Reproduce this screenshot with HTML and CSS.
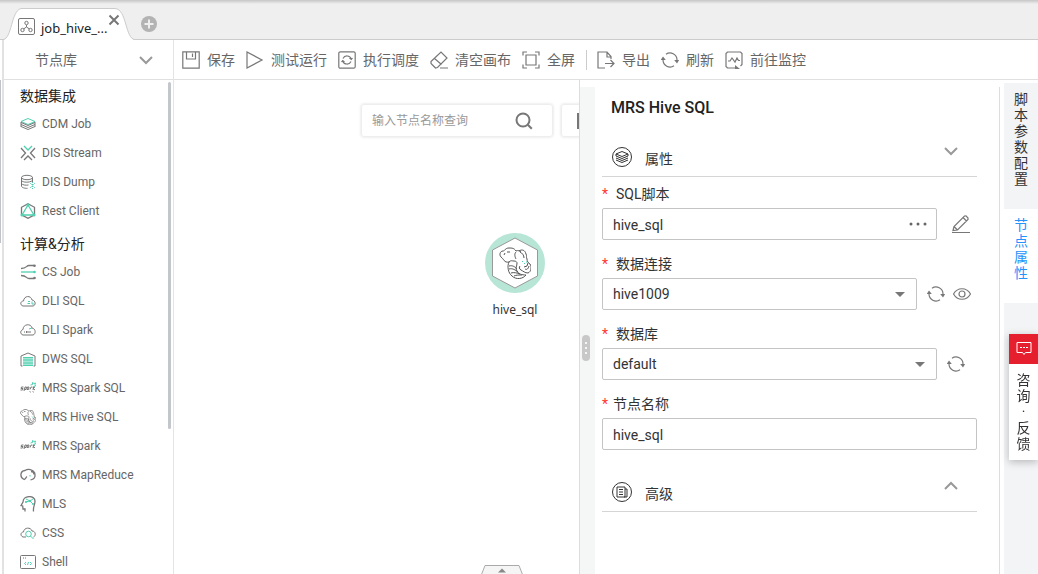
FILE: index.html
```
<!DOCTYPE html>
<html lang="zh-CN">
<head>
<meta charset="utf-8">
<title>job_hive_sql</title>
<link rel="stylesheet" href="styles.css">
</head>
<body>
<svg class="defs" width="0" height="0" aria-hidden="true">
  <symbol id="refresh" viewBox="0 0 18 18"><path d="M5 3.300A7 7 0 0 1 16 9M13 14.700A7 7 0 0 1 2 9"/><path class="solid" d="M-.3 9 2 5.500 4.800 9zM13.200 9h5L16 12.500z"/></symbol>
  <symbol id="down" viewBox="0 0 14 14"><path d="m1 4 6 6 6-6"/></symbol>
  <symbol id="elephant" viewBox="0 0 32 32"><path d="M10 15C5 16 5 12 2 10 0 8 1 4 4 4 6 4 6 1 10 1c3 0 5 0 7 3M10 15c2-2 3-1 5-1M17 4c2-1 4 0 5 1M20 4c3-2 6-1 7 3 1 2 0 3 1 5M21 5c2 1 4 3 4 6M28 12c0 2 1 4 3 5 2 3 1 8-2 9-3 0-5-2-7-3M30 19c-1 3-2 4-4 3M29 16l-1 3-3 1M10 15C8 19 9 26 13 29c4 4 11 3 14-1-4 0-8-1-9-4-2-3 0-5 0-8M15 14c2 0 3 1 3 2M10 19c4-1 6 1 8 3M10 22c4-1 6 1 9 3M12 26c3-1 6 0 9 1M15 29c2-1 5-1 8-1M22 23c-2-1-2-3-1-4M17 5c-2 2-1 5 0 7M5 8l1-2M8 5h3"/><path class="green" d="m23 14 1 1m1 2 1-1M27 15h1"/></symbol>
  <symbol id="spark" viewBox="0 0 16 16"><path d="M3.500 7H1.500l-.5 1.500h2L2.500 10H.5M4 11l1-4h1.500L6 9.500H4.500M9 7H7.500L7 9.500h1.500L9 7M10 9.500 11 7l1.500.2M13 10l.7-3.500M15 7l-2 1.300L15 10"/><path class="green" d="m10.500 5 2-.5V2.500l1.500 1 1.500-.5-.5 1.500.5 1.500-2 .5"/></symbol>
</svg>
<header class="tabbar">
  <div class="tab">
    <svg class="tab-shape" viewBox="0 0 132 32"><path d="M0 32C9 31 8 3 18 .5H112C124 1 122 31 132 32z" fill="#fff"/><path d="M0 31.500C9 31 8 3 18 .5H112C124 1 122 31 132 31.500" fill="none" stroke="#ccc"/></svg>
    <svg class="ic tab-icon" viewBox="0 0 18 18"><rect x=".5" y=".5" width="16" height="16" rx="1.500"/><circle cx="8.500" cy="5" r="1.700"/><circle cx="4.500" cy="12" r="1.700"/><circle cx="12.500" cy="12" r="1.700"/><path d="M8.500 7v2l-3 2m3-2 3 2"/></svg>
    <span class="tab-title">job_hive_...</span>
    <button class="tab-close" aria-label="关闭"><svg class="ic" viewBox="0 0 12 12"><path d="m1.500 1.500 9 9m0-9-9 9"/></svg></button>
  </div>
  <button class="tab-add" aria-label="新建"><svg viewBox="0 0 16 16"><circle cx="8" cy="8" r="8" fill="#b3b3b3"/><path d="M8 3.500v9M3.500 8h9" stroke="#efefef" stroke-width="2"/></svg></button>
</header>
<div class="shell">
  <div class="rail"></div>
  <aside class="library">
    <button class="library-head"><span>节点库</span><svg class="ic" viewBox="0 0 14 14"><use href="#down"/></svg></button>
    <nav class="nodes">
      <section>
        <h2>数据集成</h2>
        <ul>
          <li><svg class="ic" viewBox="0 0 16 16"><path class="green" d="M1 5.500 8 2.500l7 3-7 3z"/><path d="m1 6.500 7 3 7-3M1 8.500l7 3 7-3M1 10.500l7 3 7-3M1 6v5M15 6v5"/></svg>CDM Job</li>
          <li><svg class="ic" viewBox="0 0 16 16"><path class="green bold" d="m4 1 4 4 4-4"/><path class="bold" d="m1 3 4.500 5L1 13M15 3l-4.500 5 4.500 5M4 15l4-4 4 4"/></svg>DIS Stream</li>
          <li><svg class="ic" viewBox="0 0 16 16"><ellipse cx="7" cy="3.500" rx="5.500" ry="2.200"/><path d="M1.500 3.500V12c0 1.500 3 2.500 6 2.300M12.500 3.500V8M1.500 6.500c1 2 8 2.500 11 0M1.500 9.500c1 1.500 4 2 7 1.500"/><path class="green" d="m10 9 5 5m0-5-5 5m2.500-6v7" stroke-dasharray="1 1"/></svg>DIS Dump</li>
          <li><svg class="ic" viewBox="0 0 16 16"><path class="bold" d="m8 .8 6.500 3.500v7.500L8 15.300l-6.500-3.500V4.300z"/><path class="green bold" d="m8 2 6 10H2z"/><circle class="mint" cx="8" cy="2" r="1.500"/><circle class="mint" cx="2" cy="12" r="1.500"/><circle class="mint" cx="14" cy="12" r="1.500"/></svg>Rest Client</li>
        </ul>
      </section>
      <section>
        <h2>计算&amp;分析</h2>
        <ul>
          <li><svg class="ic" viewBox="0 0 16 16"><path class="bold" d="M1 4.500c6 0 5-3 8-3h5M1 11.500c6 0 5 3 8 3h5"/><path class="green bold" d="M1 8h13"/><circle class="dot" cx="14.500" cy="1.800" r="1.300"/><circle class="dot" cx="14.500" cy="14" r="1.300"/><circle class="mint" cx="14.500" cy="8" r="1.300"/></svg>CS Job</li>
          <li><svg class="ic" viewBox="0 0 16 16"><path d="M3 13C-.5 12 .5 8 3.500 8 4 2.500 11 2 12 7c4 .5 4 5.500 1 6z"/><path class="green" d="M8 8.500h2M7.500 10.500H10M12 8.500v2.500h2"/></svg>DLI SQL</li>
          <li><svg class="ic" viewBox="0 0 16 16"><path d="M3 13C-.5 12 .5 8 3 7.500 3 2 11 1 12 6c4 .5 4 6.500 1 7zM4 10h1M6.500 9v2M8 9v2M10 9v2"/><path class="green" d="m9 7 3-1"/></svg>DLI Spark</li>
          <li><svg class="ic" viewBox="0 0 16 16"><path d="M1 15V5l7-3 7 3v10M1 15h1.500M15 15h-1.500"/><path class="mint" d="M3 6h10v9H3z" opacity=".5"/><path class="green" d="M3 6.500h10M3 9h10M3 12h10M3 14.500h10"/></svg>DWS SQL</li>
          <li><svg class="ic" viewBox="0 0 16 16"><use href="#spark"/><path d="M9 11.500h1.500v1.500M12 11.500h1.500V13" opacity=".4"/></svg>MRS Spark SQL</li>
          <li><svg class="ic" viewBox="0 0 32 32" stroke-width="2"><use class="thick" href="#elephant"/></svg>MRS Hive SQL</li>
          <li><svg class="ic" viewBox="0 0 16 16"><use href="#spark"/></svg>MRS Spark</li>
          <li><svg class="ic" viewBox="0 0 16 16"><path class="bold" d="M4 12.500C-.5 10.500 0 4 5 3.500c3-2 8-1 9.500 2 1 3 .5 6-1.500 6.500-1 .5-2.500 1-2.500 1M4 12.500c2 0 1.500-2 3-3"/><path class="bold" d="M11 4.500c2 0 3 1 3 3"/><path class="green" d="M10 8v1.500"/></svg>MRS MapReduce</li>
          <li><svg class="ic" viewBox="0 0 16 16"><path class="bold" d="M5 15.500V13H3l-.3-3L1 9.500 3 6c0-7 12-7 12-1 0 4-2 5-1.500 10.500"/><path class="green" d="m6 3 4 2 3-2M5 6l5-1 3 3"/><circle class="mint" cx="10" cy="5" r="1.200"/><circle class="mint" cx="6" cy="6" r="1"/><circle class="mint" cx="13" cy="8" r="1"/></svg>MLS</li>
          <li><svg class="ic" viewBox="0 0 16 16"><path d="M6 12H3C0 11 .5 7 3.500 7 4 2 11 2 12 6c4 0 4 5 1.500 6"/><circle class="green" cx="8.500" cy="9" r="2.800"/><path class="green" d="m10.500 11 3 3"/></svg>CSS</li>
          <li><svg class="ic" viewBox="0 0 16 16"><rect x=".5" y="1.500" width="15" height="13" rx="1"/><path d="M3 4h1m1 0h1"/><path class="green" d="M6 8 4.500 9.500 6 11m4-3 1.500 1.500L10 11m-1.500-3-1 3"/></svg>Shell</li>
        </ul>
      </section>
    </nav>
    <div class="scroll-thumb"></div>
  </aside>
  <main class="work">
    <div class="toolbar">
      <button><svg class="ic" viewBox="0 0 18 18"><path d="M.8.8h16.400v16.400H.8zM4.500 1v7h9V1M10.500 2.500V6"/></svg>保存</button>
      <button><svg class="ic" viewBox="0 0 18 18"><path d="M1 1v16l15-8z"/></svg>测试运行</button>
      <button><svg class="ic" viewBox="0 0 18 18"><rect x=".8" y=".8" width="16.400" height="16.400" rx="1.500"/><path d="M5 7.500A4.500 4.500 0 0 1 13.300 8M13 10.500A4.500 4.500 0 0 1 4.700 10M3.500 11l1.200-1.500L6.500 11M11.500 7l1.800 1.500L14.500 7"/></svg>执行调度</button>
      <button><svg class="ic" viewBox="0 0 18 18"><path d="M1 10.500 11 1l6 6L7.500 16.500 5.500 17 1 12.500zM4.500 7.500l7 6M10 17h8"/></svg>清空画布</button>
      <button><svg class="ic" viewBox="0 0 18 18"><path d="M4 4h10v10H4zM1 4.500V1h4M13 1h4v3.500M17 13.500V17h-4M5 17H1v-3.500"/></svg>全屏</button>
      <span class="sep"></span>
      <button><svg class="ic" viewBox="0 0 18 18"><path d="M8 17H1V1h9l4 4.500V8M10 1v5h4M8 12.500h9M13.500 9l3.500 3.500-3.500 3.500"/></svg>导出</button>
      <button><svg class="ic" viewBox="0 0 18 18"><use href="#refresh"/></svg>刷新</button>
      <button><svg class="ic" viewBox="0 0 18 18"><path d="M10 17H2.500L1 15.500V2.500L2.500 1h13L17 2.500v11L15.500 15M3 10h2l2-3 3 4 2-4 1.500 2.500H15"/><path class="solid" d="m10 14 5 4h-5z"/></svg>前往监控</button>
    </div>
    <div class="stage">
      <div class="canvas">
        <div class="canvas-tools">
          <div class="search"><input type="search" aria-label="查询" placeholder="输入节点名称查询"><button aria-label="搜索"><svg class="ic" viewBox="0 0 18 18"><circle cx="8" cy="8" r="6.500"/><path d="m12.800 12.800 4 4"/></svg></button></div>
          <button class="tool" aria-label="布局"><svg class="ic" viewBox="0 0 16 16"><path d="M1 0v16M1 1h14v14H1z"/></svg></button>
        </div>
        <div class="flow-node">
          <svg viewBox="0 0 60 60"><circle cx="30" cy="30" r="30" fill="#b7e5d6"/><path d="M30 5 52.500 17v26L30 55 7.500 43V17z" fill="#fff" stroke="#999" stroke-linejoin="round"/><svg class="ic" x="14" y="14" width="32" height="32" viewBox="0 0 32 32"><use href="#elephant"/></svg></svg>
          <span>hive_sql</span>
        </div>
        <button class="drawer" aria-label="展开"><svg viewBox="0 0 44 12"><path d="M.5 12 5 .5h34L43.500 12" fill="#f5f5f5" stroke="#aaa"/><path d="m18 7.500 4-4 4 4z" fill="#888"/></svg></button>
      </div>
      <div class="splitter"><svg viewBox="0 0 8 26"><rect width="8" height="26" rx="4" fill="#c8c8c8"/><path d="M3 7h2v2H3zM3 12h2v2H3zM3 17h2v2H3z" fill="#f5f7f7"/></svg></div>
      <form class="panel">
        <h1>MRS Hive SQL</h1>
        <button type="button" class="fold"><svg class="ic badge" viewBox="0 0 22 22"><circle cx="11" cy="11" r="9.500"/><path d="m5 8 6-2.500L17 8l-6 2.500zM5 10l6 2.500 6-2.500M5 12l6 2.500 6-2.500M5 14l6 2.500 6-2.500M5 8v2M17 8v2"/></svg><span>属性</span><svg class="ic arrow" viewBox="0 0 14 14"><use href="#down"/></svg></button>
        <div class="field">
          <label class="wide" for="script">SQL脚本</label>
          <div class="row"><div class="box"><input id="script" value="hive_sql"><button type="button" class="more" aria-label="选择"><svg viewBox="0 0 18 4"><circle cx="2" cy="2" r="1.500"/><circle cx="9" cy="2" r="1.500"/><circle cx="16" cy="2" r="1.500"/></svg></button></div>
          <div class="acts one edit"><button type="button" aria-label="编辑"><svg class="ic" viewBox="0 0 18 18"><path d="M0 17.500h18M1 15.500l1-4L12.500 1l1.500-.2L16 3v1.500L5.500 15zM2 11.500 5.500 15M11 2.500 14.500 6"/></svg></button></div></div>
        </div>
        <div class="field">
          <label class="wide" for="conn">数据连接</label>
          <div class="row"><div class="box pick"><select id="conn"><option>hive1009</option></select></div>
          <div class="acts two"><button type="button" aria-label="刷新连接"><svg class="ic" viewBox="0 0 18 18"><use href="#refresh"/></svg></button><button type="button" aria-label="查看"><svg class="ic" viewBox="0 0 18 18"><path d="M.5 9c4-7 13-7 17 0-4 7-13 7-17 0z"/><circle cx="9" cy="9" r="3"/></svg></button></div></div>
        </div>
        <div class="field">
          <label class="wide" for="db">数据库</label>
          <div class="row"><div class="box pick"><select id="db"><option>default</option></select></div>
          <div class="acts one"><button type="button" aria-label="刷新数据库"><svg class="ic" viewBox="0 0 18 18"><use href="#refresh"/></svg></button></div></div>
        </div>
        <div class="field">
          <label for="name">节点名称</label>
          <div class="row"><div class="box"><input id="name" value="hive_sql"></div></div>
        </div>
        <button type="button" class="fold last"><svg class="ic badge" viewBox="0 0 22 22"><circle cx="11" cy="11" r="9.500"/><path d="M6 6h8v10H6zM14 8h2v8h-3M8 8.500h4M8 11h4M8 13.500h4"/></svg><span>高级</span><svg class="ic arrow up" viewBox="0 0 14 14"><use href="#down"/></svg></button>
      </form>
      <div class="side-tabs">
        <button><span>脚本参数配置</span></button>
        <button class="active"><span>节点属性</span></button>
      </div>
    </div>
  </main>
</div>
<button class="feedback"><span class="feedback-icon"><svg viewBox="0 0 16 16"><path d="M1 1.500h14v10H9.500L8 13.500l-1.500-2H1z" fill="none" stroke="#fff"/><path d="M4 6h2v1H4zM7 6h2v1H7zM10 6h2v1h-2z" fill="#fff"/></svg></span><span class="feedback-text">咨询<br>·<br>反馈</span></button>
</body>
</html>
```
FILE: styles.css
```
* { box-sizing: border-box; }
body {
  margin: 0;
  height: 100vh;
  display: flex;
  flex-direction: column;
  overflow: hidden;
  background: #fff;
  color: #333;
  font: 14px/20px Roboto, "Noto Sans CJK SC", sans-serif;
}
button, input, select { font: inherit; color: inherit; }
button { padding: 0; border: 0; background: none; }
svg { display: block; flex: none; }
h1, h2, ul { margin: 0; padding: 0; list-style: none; }
.defs { position: absolute; }
.ic { fill: none; stroke: #777; stroke-width: 1; }
.solid { fill: #777; stroke: none; }
.green { stroke: #4fd0b0; }
.mint { fill: #4fd0b0; stroke: none; }
.dot { fill: #777; stroke: none; }
.bold { stroke-width: 1.3; }
.thick { stroke-width: 1.6; }

.tabbar {
  flex: none;
  height: 40px;
  display: flex;
  align-items: flex-end;
  padding-left: 3px;
  background: linear-gradient(#c6c6c6, #efefef 4px);
  border-bottom: 1px solid #ccc;
}
.tab {
  position: relative;
  width: 132px;
  height: 32px;
  margin-bottom: -1px;
  display: flex;
  align-items: center;
  gap: 5px;
  padding: 7px 15px 0;
}
.tab-shape { position: absolute; left: 0; top: 0; width: 132px; height: 32px; }
.tab-icon { position: relative; width: 18px; height: 18px; margin-top: -2px; }
.tab-title { position: relative; color: #222; font-family: "Noto Sans", sans-serif; font-size: 13px; white-space: nowrap; }
.tab-close { position: absolute; right: 15px; top: 6px; }
.tab-close svg { width: 12px; height: 12px; stroke-width: 2; }
.tab-add { align-self: center; margin: 8px 0 0 6px; }
.tab-add svg { width: 16px; height: 16px; }

.shell { flex: 1; min-height: 0; display: flex; }
.rail { width: 4px; flex: none; border-right: 2px solid #e2e2e2; }
.rail::before { content: ""; display: block; width: 1px; height: 163px; margin-top: 40px; background: #bfc3c7; }
.library {
  position: relative;
  flex: none;
  width: 170px;
  border-right: 1px solid #e4e4e4;
  display: flex;
  flex-direction: column;
}
.library-head {
  flex: none;
  height: 40px;
  display: flex;
  align-items: center;
  justify-content: space-between;
  padding: 0 20px 0 31px;
  border-bottom: 1px solid #e0e0e0;
  color: #666;
}
.library-head svg { width: 14px; height: 14px; stroke-width: 2; stroke: #999; }
.nodes { flex: 1; min-height: 0; overflow: hidden; padding: 3px 0 0 16px; }
.nodes section + section { margin-top: 6px; }
.nodes h2 { font-size: 14px; line-height: 26px; font-weight: 400; color: #222; }
.nodes li { display: flex; align-items: center; gap: 6px; height: 29px; font-size: 12px; color: #666; }
.nodes li svg { width: 16px; height: 16px; }
.scroll-thumb { position: absolute; right: 2px; top: 42px; width: 3px; height: 65%; border-radius: 2px; background: #c3c7cb; }

.work { flex: 1; min-width: 0; display: flex; flex-direction: column; }
.toolbar {
  flex: none;
  height: 40px;
  display: flex;
  align-items: center;
  gap: 11px;
  padding-left: 8px;
  border-bottom: 1px solid #e0e0e0;
}
.toolbar button { display: flex; align-items: center; gap: 7px; color: #666; white-space: nowrap; }
.toolbar svg { width: 18px; height: 18px; stroke-width: 1.2; }
.sep { width: 1px; height: 20px; margin-right: -1px; background: #ccc; }

.stage { flex: 1; min-height: 0; display: flex; }
.canvas { position: relative; flex: 1; min-width: 0; overflow: hidden; border-right: 1px solid #ddd; }
.canvas-tools { display: flex; gap: 8px; padding: 24px 0 0 187px; }
.search, .tool { flex: none; height: 33px; border: 1px solid #eee; border-radius: 3px; box-shadow: 0 0 3px #ddd; }
.search { width: 192px; display: flex; align-items: center; padding: 0 19px 0 10px; }
.search input { flex: 1; min-width: 0; border: 0; padding: 0; outline: 0; background: none; font-size: 12px; }
.search input::placeholder { color: #999; }
.search svg { width: 18px; height: 18px; stroke-width: 2; }
.tool { width: 46px; padding-left: 15px; }
.tool svg { width: 16px; height: 16px; stroke-width: 2; }
.flow-node { position: absolute; left: 311px; top: 153px; width: 60px; text-align: center; }
.flow-node > svg { width: 60px; height: 60px; }
.flow-node .ic { stroke: #555; }
.flow-node span { display: block; margin-top: 7px; font: 12px/20px "Noto Sans", sans-serif; }
.drawer { position: absolute; left: 306px; bottom: -3px; }
.drawer svg { width: 44px; height: 12px; }
.splitter { flex: none; width: 15px; margin-top: 7px; padding: 35px 2px 0; display: flex; align-items: center; background: #f5f7f7; }
.splitter svg { width: 8px; height: 26px; }

.panel { flex: none; width: 405px; margin-top: 7px; padding: 0 22px 0 7px; border-right: 1px solid #ddd; }
.panel h1 { padding: 10px 9px 0; font-size: 16px; font-weight: 500; line-height: 22px; color: #222; }
.fold {
  width: 100%;
  height: 58px;
  display: flex;
  align-items: flex-end;
  padding: 0 19px 8px 9px;
  border-bottom: 1px solid #d5d5d5;
  text-align: left;
}
.fold span { flex: 1; margin-left: 12px; line-height: 18px; }
.fold .badge { width: 22px; height: 22px; stroke: #333; }
.fold .arrow { width: 14px; height: 14px; margin-bottom: 10px; stroke-width: 2; stroke: #999; }
.up { transform: rotate(180deg); }
.last { height: 62px; }
.field { padding-top: 10px; }
.fold + .field { padding-top: 3px; }
.field label { display: flex; gap: 5px; line-height: 28px; }
.field label::before { content: "*"; color: #f33; }
.field .wide { gap: 8px; }
.row { display: flex; align-items: center; }
.box { position: relative; flex: 1; height: 32px; }
.box input, .box select {
  width: 100%;
  height: 32px;
  padding: 0 10px;
  border: 1px solid #c4c4c4;
  border-radius: 2px;
  outline: 0;
  background: #fff;
  appearance: none;
}
.box input { padding-top: 2px; }
.pick::after { content: ""; position: absolute; right: 12px; top: 14px; border: 5px solid transparent; border-top-color: #777; border-bottom: 0; }
.more { position: absolute; right: 10px; top: 14px; }
.more svg { width: 18px; height: 4px; fill: #666; }
.acts { display: flex; gap: 8px; padding-left: 10px; }
.acts svg { width: 18px; height: 18px; stroke-width: 1.2; }
.one { width: 40px; }
.two { width: 60px; }
.edit { padding-left: 15px; }

.side-tabs { flex: none; width: 38px; margin-top: 3px; padding-left: 4px; background: linear-gradient(to right, #fff 4px, #f3f4f6 4px); }
.side-tabs button { display: flex; justify-content: center; width: 100%; padding: 8px 0 22px; }
.side-tabs span { width: 14px; line-height: 16px; word-break: break-all; }
.side-tabs .active { background: #fff; color: #2593fc; }
.feedback { position: fixed; right: 0; top: 334px; width: 29px; background: #fff; box-shadow: 0 2px 8px rgba(0, 0, 0, .25); }
.feedback-icon { display: flex; align-items: center; justify-content: center; height: 30px; background: #e61f2e; }
.feedback-icon svg { width: 16px; height: 16px; }
.feedback-text { display: block; width: 14px; margin: 0 auto; padding: 8px 0; line-height: 16px; word-break: break-all; }
```
